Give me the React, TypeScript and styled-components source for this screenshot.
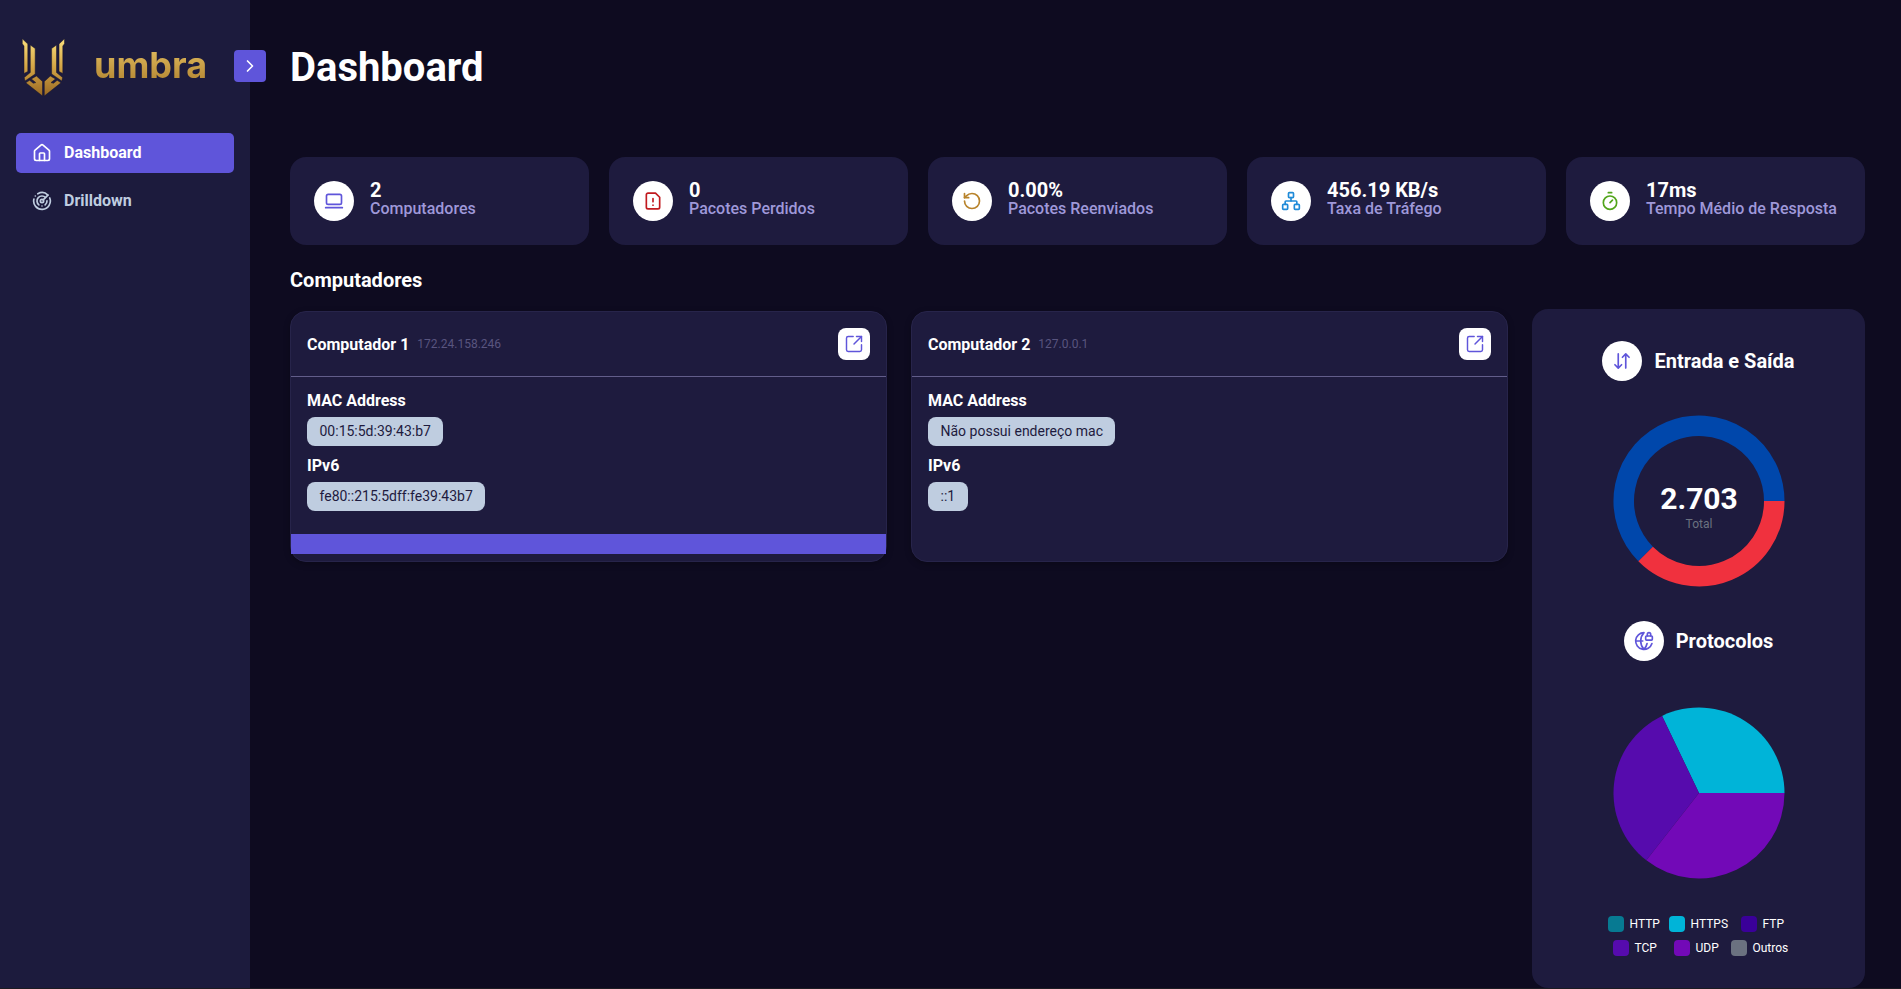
import React from 'react';
import styled, { createGlobalStyle } from 'styled-components';
import {
  House, Radar, ChevronRight, LaptopMinimal, RotateCcw, Network, Timer,
  SquareArrowOutUpRight, GlobeLock,
} from 'lucide-react';

const GlobalStyle = createGlobalStyle`
  * { box-sizing: border-box; }
  body { margin: 0; background: #0e0b20; font-family: Roboto, "Liberation Sans", sans-serif; color: #fff; overflow: hidden; }
  h1, h2, h3, p { margin: 0; }
  svg { display: block; flex: none; }
`;

const Page = styled.div`
  display: flex;
  height: 989px;
  border-bottom: 1px solid #1c1b22;
`;

const Sidebar = styled.aside`
  position: relative;
  width: 250px;
  flex: none;
  background: #1c1b3d;
  padding: 0 16px;
`;

const Brand = styled.div`
  display: flex;
  align-items: center;
  height: 133px;
  padding-left: 5px;
`;

const BrandName = styled.span`
  margin-left: 27px;
  padding-bottom: 3px;
  font: 700 36px/44px Inter, sans-serif;
  background: linear-gradient(#e0bb5e 10%, #b0822f 90%);
  -webkit-background-clip: text;
  background-clip: text;
  color: transparent;
`;

const Toggle = styled.button`
  position: absolute;
  right: -16px;
  top: 50px;
  width: 32px;
  height: 32px;
  display: grid;
  place-items: center;
  padding: 0;
  border: 0;
  border-radius: 4px;
  background: #5f55da;
  color: #fff;
`;

const Nav = styled.nav`
  display: flex;
  flex-direction: column;
  gap: 8px;
`;

const NavItem = styled.a<{ $active?: boolean }>`
  display: flex;
  align-items: center;
  gap: 12px;
  height: 40px;
  padding-left: 16px;
  border-radius: 5px;
  font-weight: 700;
  font-size: 16px;
  background: ${(p) => (p.$active ? '#5f55da' : 'transparent')};
  color: ${(p) => (p.$active ? '#fff' : '#bfcde0')};
`;

const NavLabel = styled.span`
  padding-bottom: 2px;
`;

const Main = styled.main`
  flex: 1;
  min-width: 0;
  padding: 44px 36px 0 40px;
`;

const Title = styled.h1`
  font-size: 40px;
  line-height: 48px;
  font-weight: 700;
  margin-bottom: 65px;
`;

const Stats = styled.section`
  display: grid;
  grid-template-columns: repeat(5, 1fr);
  gap: 20px;
`;

const StatCard = styled.article`
  display: flex;
  align-items: center;
  gap: 16px;
  height: 88px;
  padding: 0 24px;
  border-radius: 16px;
  background: #1e1b3e;
`;

const Round = styled.span<{ $color: string }>`
  width: 40px;
  height: 40px;
  flex: none;
  display: grid;
  place-items: center;
  border-radius: 50%;
  background: #fff;
  color: ${(p) => p.$color};
`;

const StatText = styled.div`
  padding-bottom: 4px;
  white-space: nowrap;
`;

const StatValue = styled.p`
  font-size: 20px;
  line-height: 20px;
  font-weight: 700;
`;

const StatLabel = styled.p`
  font-size: 16px;
  line-height: 18px;
  font-weight: 500;
  color: #9f98d9;
`;

const SectionTitle = styled.h2`
  font-size: 20px;
  line-height: 24px;
  font-weight: 700;
  margin: 23px 0 17px;
`;

const Content = styled.div`
  display: grid;
  grid-template-columns: 1fr 333px;
  gap: 24px;
`;

const Machines = styled.section`
  display: grid;
  grid-template-columns: 1fr 1fr;
  gap: 24px;
  align-items: start;
  padding-top: 2px;
`;

const Machine = styled.article`
  height: 251px;
  border: 1px solid #27244a;
  border-radius: 16px;
  background: #1e1b3e;
  box-shadow: 0 2px 6px rgba(0, 0, 0, 0.25);
`;

const MachineHead = styled.header`
  display: flex;
  align-items: center;
  height: 65px;
  padding: 0 16px;
  border-bottom: 1px solid #625d8a;
`;

const MachineName = styled.h3`
  font-size: 16px;
  font-weight: 700;
`;

const Ip = styled.span`
  flex: 1;
  margin-left: 8px;
  font-size: 12px;
  color: #59557f;
`;

const OpenButton = styled.button`
  width: 32px;
  height: 32px;
  display: grid;
  place-items: center;
  padding: 0;
  border: 0;
  border-radius: 8px;
  background: #fff;
  color: #5f55da;
`;

const MachineBody = styled.div`
  display: flex;
  flex-direction: column;
  align-items: flex-start;
  padding: 14px 16px 0;
  height: 157px;
`;

const Field = styled.p`
  font-size: 16px;
  line-height: 19px;
  font-weight: 700;
`;

const Chip = styled.span`
  margin: 7px 0 10px;
  height: 29px;
  padding: 0 12.5px;
  border-radius: 8px;
  background: #bfcde0;
  color: #1e1b3e;
  font-size: 14px;
  line-height: 29px;
`;

const ActivityBar = styled.div`
  height: 20px;
  background: #5f55da;
`;

const Panel = styled.aside`
  display: flex;
  flex-direction: column;
  align-items: center;
  height: 679px;
  padding-top: 32px;
  border-radius: 16px;
  background: #1e1b3e;
`;

const PanelTitle = styled.h2`
  display: flex;
  align-items: center;
  gap: 12px;
  height: 40px;
  font-size: 20px;
  font-weight: 700;
`;

const ChartSlot = styled.div<{ $top: number; $bottom: number }>`
  margin: ${(p) => p.$top}px 0 ${(p) => p.$bottom}px 1px;
`;

const Legend = styled.ul`
  display: flex;
  flex-direction: column;
  gap: 8px;
  margin: 0;
  padding: 0;
  list-style: none;
`;

const LegendRow = styled.li<{ $indent: number }>`
  display: flex;
  height: 16px;
  padding-left: ${(p) => p.$indent}px;
`;

const LegendItem = styled.span<{ $width: number; $color: string }>`
  display: flex;
  align-items: center;
  gap: 6px;
  width: ${(p) => p.$width}px;
  font-size: 12px;
  line-height: 16px;
  &::before {
    content: '';
    width: 16px;
    height: 16px;
    flex: none;
    border-radius: 4px;
    background: ${(p) => p.$color};
  }
`;

const Logo = () => (
  <svg width="46" height="62" viewBox="0 0 46 62">
    <defs>
      <linearGradient id="gold" gradientUnits="userSpaceOnUse" x1="0" y1="2" x2="0" y2="60">
        <stop offset="0" stopColor="#fbe07c" />
        <stop offset=".5" stopColor="#d4a545" />
        <stop offset="1" stopColor="#9a6a24" />
      </linearGradient>
      <g id="wing">
        <path d="M1.3 2.8 6.800 8V35.500L3 37.500V10L1.300 7.800Z" />
        <path d="M9.300 9 14.200 12.500V38L4 45 3.200 41.500 9.300 36.500Z" />
        <path d="M4.800 46.800 8.600 44.300 12.300 47.300 14.800 46.600 10.300 42.900 15.500 40 21.500 45.500V60Z" />
      </g>
    </defs>
    <g fill="url(#gold)" stroke="#15122c" strokeWidth=".5">
      <use href="#wing" />
      <use href="#wing" transform="matrix(-1 0 0 1 44.8 0)" />
    </g>
  </svg>
);

const stroke = {
  width: 20, height: 20, viewBox: '0 0 24 24', fill: 'none', stroke: 'currentColor',
  strokeWidth: 2, strokeLinecap: 'round' as const, strokeLinejoin: 'round' as const,
};

const FileAlert = () => (
  <svg {...stroke}>
    <path d="M15 2.500H6a2 2 0 0 0-2 2v15a2 2 0 0 0 2 2h12a2 2 0 0 0 2-2V7.500z" />
    <path d="M12 9v4M12 17h.01" />
  </svg>
);

const DownUp = () => (
  <svg {...stroke}>
    <path d="M7.500 3.500v17M3.500 16.500l4 4 4-4M16.500 20.500v-17M12.500 7.500l4-4 4 4" />
  </svg>
);

const point = (deg: number, r: number) => {
  const a = (deg * Math.PI) / 180;
  return `${86 + r * Math.cos(a)} ${86 - r * Math.sin(a)}`;
};

const ring = (from: number, to: number) =>
  `M${point(from, 75.25)}A75.25 75.25 0 ${to - from > 180 ? 1 : 0} 0 ${point(to, 75.25)}`;

const wedge = (from: number, to: number) => `M86 86L${point(from, 85.5)}A85.5 85.5 0 0 0 ${point(to, 85.5)}Z`;

const Donut = () => (
  <svg width="172" height="172" viewBox="0 0 172 172">
    <g fill="none" strokeWidth="20.5">
      <path d={ring(0, 224.8)} stroke="#0047ab" />
      <path d={ring(224.8, 360)} stroke="#f0313e" />
    </g>
    <g fontFamily="Roboto, sans-serif" textAnchor="middle">
      <text x="86" y="94" fill="#fff" fontSize="30" fontWeight="700">2.703</text>
      <text x="86" y="113" fill="#6b7280" fontSize="12">Total</text>
    </g>
  </svg>
);

const Pie = () => (
  <svg width="172" height="172" viewBox="0 0 172 172">
    <path d={wedge(0, 115.6)} fill="#00b4d8" />
    <path d={wedge(115.6, 232)} fill="#560bad" />
    <path d={wedge(232, 360)} fill="#7209b7" />
  </svg>
);

const stats = [
  { value: '2', label: 'Computadores', color: '#5f55da', icon: <LaptopMinimal size={20} /> },
  { value: '0', label: 'Pacotes Perdidos', color: '#c11a1f', icon: <FileAlert /> },
  { value: '0.00%', label: 'Pacotes Reenviados', color: '#b8832b', icon: <RotateCcw size={20} /> },
  { value: '456.19 KB/s', label: 'Taxa de Tráfego', color: '#1f8ad8', icon: <Network size={20} /> },
  { value: '17ms', label: 'Tempo Médio de Resposta', color: '#52a51b', icon: <Timer size={20} /> },
];

const machines = [
  { name: 'Computador 1', ip: '172.24.158.246', mac: '00:15:5d:39:43:b7', ipv6: 'fe80::215:5dff:fe39:43b7', active: true },
  { name: 'Computador 2', ip: '127.0.0.1', mac: 'Não possui endereço mac', ipv6: '::1', active: false },
];

const protocols = [
  { indent: 0, items: [['HTTP', '#077a92', 61], ['HTTPS', '#00b4d8', 72], ['FTP', '#3a0099', 46]] },
  { indent: 5, items: [['TCP', '#560bad', 61], ['UDP', '#7209b7', 57], ['Outros', '#6b7280', 59]] },
] as { indent: number; items: [string, string, number][] }[];

export default function App() {
  return (
    <>
      <GlobalStyle />
      <Page>
        <Sidebar>
          <Brand><Logo /><BrandName>umbra</BrandName></Brand>
          <Toggle aria-label="Menu"><ChevronRight size={20} /></Toggle>
          <Nav>
            <NavItem $active><House size={20} /><NavLabel>Dashboard</NavLabel></NavItem>
            <NavItem><Radar size={20} /><NavLabel>Drilldown</NavLabel></NavItem>
          </Nav>
        </Sidebar>
        <Main>
          <Title>Dashboard</Title>
          <Stats>
            {stats.map((s) => (
              <StatCard key={s.label}>
                <Round $color={s.color}>{s.icon}</Round>
                <StatText>
                  <StatValue>{s.value}</StatValue>
                  <StatLabel>{s.label}</StatLabel>
                </StatText>
              </StatCard>
            ))}
          </Stats>
          <SectionTitle>Computadores</SectionTitle>
          <Content>
            <Machines>
              {machines.map((m) => (
                <Machine key={m.name}>
                  <MachineHead>
                    <MachineName>{m.name}</MachineName>
                    <Ip>{m.ip}</Ip>
                    <OpenButton aria-label="Abrir"><SquareArrowOutUpRight size={20} strokeWidth={1.75} /></OpenButton>
                  </MachineHead>
                  <MachineBody>
                    <Field>MAC Address</Field>
                    <Chip>{m.mac}</Chip>
                    <Field>IPv6</Field>
                    <Chip>{m.ipv6}</Chip>
                  </MachineBody>
                  {m.active && <ActivityBar />}
                </Machine>
              ))}
            </Machines>
            <Panel>
              <PanelTitle><Round $color="#5f55da"><DownUp /></Round>Entrada e Saída</PanelTitle>
              <ChartSlot $top={34} $bottom={34}><Donut /></ChartSlot>
              <PanelTitle><Round $color="#5f55da"><GlobeLock size={20} /></Round>Protocolos</PanelTitle>
              <ChartSlot $top={46} $bottom={37}><Pie /></ChartSlot>
              <Legend>
                {protocols.map((row) => (
                  <LegendRow key={row.indent} $indent={row.indent}>
                    {row.items.map(([name, color, width]) => (
                      <LegendItem key={name} $color={color} $width={width}>{name}</LegendItem>
                    ))}
                  </LegendRow>
                ))}
              </Legend>
            </Panel>
          </Content>
        </Main>
      </Page>
    </>
  );
}
